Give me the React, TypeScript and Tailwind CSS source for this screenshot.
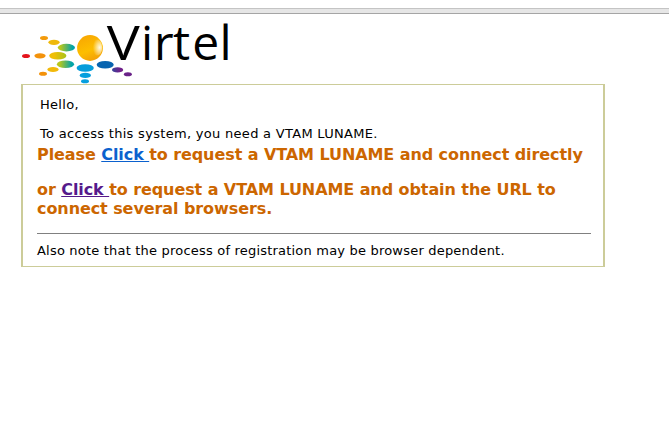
import React from "react";

const dots: [number, number, number, number, string][] = [
  [44, 38, 4, 2, "#f39a0b"],
  [54, 42.3, 5.6, 2.6, "#efb90a"],
  [66.4, 47.6, 8.6, 3.8, "url(#teal)"],
  [26, 56, 4, 2, "#e4131b"],
  [40, 55.8, 5.6, 2.6, "#f3920b"],
  [57.8, 55.7, 8.6, 3.8, "url(#lime)"],
  [65.5, 64.2, 8.6, 3.8, "url(#teal)"],
  [53, 69.5, 5.6, 2.6, "#f2b90a"],
  [43, 73.8, 4, 2, "#f3920b"],
  [85.2, 68, 8.6, 3.8, "#069ddb"],
  [85.3, 75.4, 5.6, 2.6, "#069fde"],
  [85, 81.3, 4, 2, "#069fde"],
  [105.2, 64.7, 8.5, 3.8, "#0764b0"],
  [117.6, 69.9, 5.6, 2.6, "url(#violet)"],
  [127.9, 74.2, 4, 2, "#6a2288"],
];

function Logo() {
  return (
    <svg width="240" height="70" viewBox="0 14 240 70" className="block overflow-visible" role="img" aria-label="Virtel">
      <defs>
        <linearGradient id="teal">
          <stop offset="0.15" stopColor="#b9c71b" />
          <stop offset="0.85" stopColor="#04a4a8" />
        </linearGradient>
        <linearGradient id="lime">
          <stop offset="0.3" stopColor="#efbf07" />
          <stop offset="1" stopColor="#a8c31c" />
        </linearGradient>
        <linearGradient id="violet">
          <stop offset="0" stopColor="#36439a" />
          <stop offset="0.7" stopColor="#70208a" />
        </linearGradient>
        <linearGradient id="sun" x1="0.2" y1="0" x2="0.6" y2="1">
          <stop offset="0" stopColor="#f8a602" />
          <stop offset="0.6" stopColor="#fdbe00" />
          <stop offset="1" stopColor="#f3a009" />
        </linearGradient>
        <radialGradient id="shine" cx="0.75" cy="0.5" r="0.65">
          <stop offset="0" stopColor="#fff" stopOpacity="0.9" />
          <stop offset="1" stopColor="#fff" stopOpacity="0" />
        </radialGradient>
      </defs>
      {dots.map(([x, y, rx, ry, fill]) => (
        <ellipse key={`${x}-${y}`} cx={x} cy={y} rx={rx} ry={ry} fill={fill} />
      ))}
      <circle cx="90" cy="48" r="12.9" fill="url(#sun)" />
      <ellipse cx="97" cy="47.5" rx="5.2" ry="8" fill="url(#shine)" />
      <text y="59.8" fontSize="48" className="font-['Open_Sans',sans-serif]">
        <tspan x="106.8" textLength="33" lengthAdjust="spacingAndGlyphs">V</tspan>
        <tspan x="141 154 173 192.2 219.4">irtel</tspan>
      </text>
    </svg>
  );
}

export default function App() {
  return (
    <div className="h-[444px] overflow-hidden bg-white pt-2 font-['DejaVu_Sans',Verdana,sans-serif] text-[13px] leading-4 text-black">
      <div className="h-1.5 border-y border-t-[#c4c4c4] border-b-[#a5a5a5] bg-[#e6e6e6]" />
      <Logo />
      <main className="ml-[21px] h-[183px] w-[584px] whitespace-nowrap border-x-2 border-y border-[#cccc99] pt-3 pl-3.5 pr-3">
        <p className="ml-[3px] tracking-[0.3px]">Hello,</p>
        <p className="ml-[3px] mt-[13px] tracking-[0.3px]">To access this system, you need a VTAM LUNAME.</p>
        <div className="mt-[3px] text-[16px] font-bold leading-[19px] tracking-[-0.08px] text-[#cc6600]">
          <p>
            Please <a href="#direct" className="whitespace-pre text-[#0b61ce] underline">Click </a>to request a VTAM LUNAME and connect directly
          </p>
          <p className="mt-4">
            or <a href="#url" className="whitespace-pre text-[#551a8b] underline">Click </a>to request a VTAM LUNAME and obtain the URL to
            <br />
            connect several browsers.
          </p>
        </div>
        <hr className="mt-[15px] border-t border-[#808080]" />
        <p className="mt-[9px] tracking-[0.2px]">Also note that the process of registration may be browser dependent.</p>
      </main>
    </div>
  );
}
